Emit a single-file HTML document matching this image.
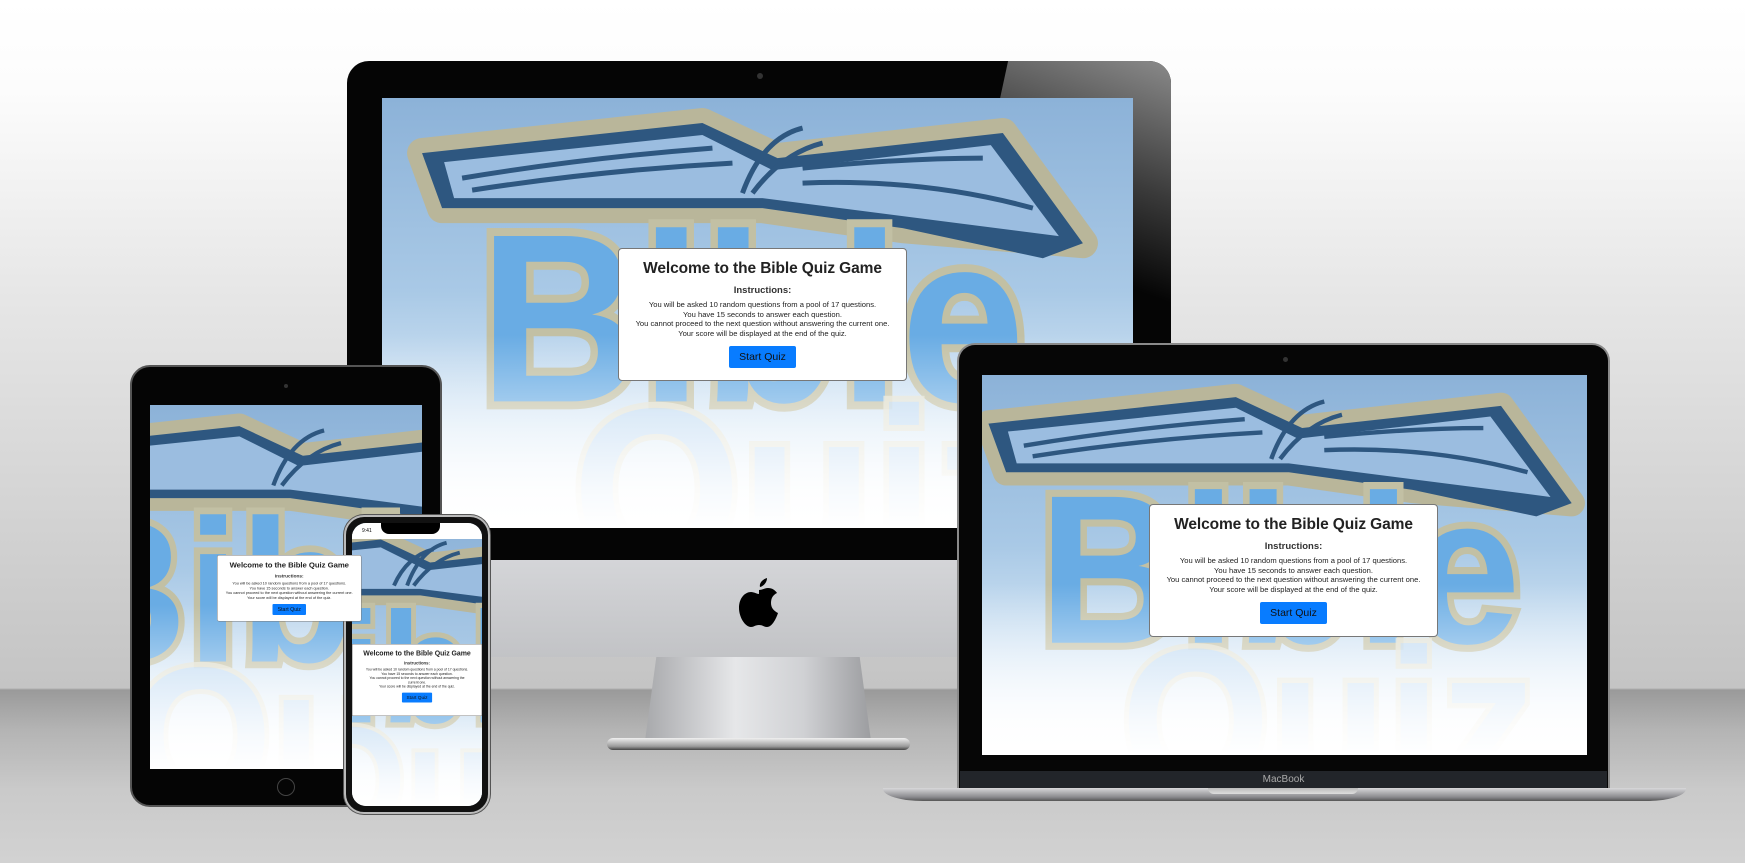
<!DOCTYPE html>
<html><head><meta charset="utf-8">
<style>
*{margin:0;padding:0;box-sizing:border-box}
body{width:1745px;height:863px;overflow:hidden;position:relative;font-family:"Liberation Sans",sans-serif;
background:linear-gradient(180deg,#fff 0px,#fcfcfc 90px,#e6e6e6 300px,#cfcfcf 560px,#c4c4c4 688px,#9a9a9a 690px,#b4b4b4 730px,#cacaca 790px,#d2d2d2 863px);}
.abs{position:absolute}
.scr{position:absolute;overflow:hidden;background:linear-gradient(180deg,#8cb2d8 0%,#a9c9e6 45%,#d8e8f6 75%,#fdfeff 100%)}
.scr svg{position:absolute;left:0;top:0;width:100%;height:100%}
.fade{position:absolute;left:0;right:0;bottom:0;height:45%;background:linear-gradient(180deg,rgba(255,255,255,0),rgba(255,255,255,0.85) 80%,#fff)}
.dlg{position:absolute;width:289px;height:133px;background:#fff;border:1px solid #777;border-radius:4px;text-align:center;color:#222;transform-origin:0 0;z-index:2}
.dlg h1{font-size:15.5px;font-weight:bold;margin-top:11px;letter-spacing:-0.1px}
.dlg h2{font-size:9.5px;font-weight:bold;margin-top:7px;color:#333}
.dlg p{font-size:7.6px;line-height:9.6px;margin-top:4px;color:#222}
.dlg .b{display:inline-block;margin-top:8px;background:#087cff;color:#111;font-size:10.5px;width:67px;height:22px;line-height:22px;border-radius:2px}
</style></head><body>

<!-- iMac -->
<div class="abs" style="left:347px;top:61px;width:824px;height:500px;background:#050505;border-radius:22px 22px 0 0"></div>
<div class="abs" style="left:990px;top:61px;width:181px;height:280px;background:linear-gradient(200deg,#8a8a8a 0%,#3a3a3a 40%,#050505 70%);clip-path:polygon(10% 0,100% 0,100% 100%,0 100%, 0 30%);border-radius:0 22px 0 0"></div>
<div class="abs" style="left:757px;top:73px;width:6px;height:6px;border-radius:50%;background:#333"></div>
<div class="abs" style="left:347px;top:560px;width:824px;height:97px;background:linear-gradient(180deg,#d4d5d8,#c2c3c6)"></div>
<svg class="abs" style="left:738px;top:578px" width="42" height="50" viewBox="0 0 42 50"><path d="M29 0c0 4-3 8-7 9c-1-4 3-8 7-9zM21 12c3 0 6-2 9-2c4 0 7 2 9 5c-4 2-6 5-6 10c0 5 3 8 7 10c-2 6-6 14-11 14c-3 0-4-2-8-2s-5 2-8 2C7 49 1 39 1 30C1 20 7 14 13 14c3 0 6 2 8 2z" fill="#000"/></svg>
<div class="abs" style="left:645px;top:657px;width:226px;height:84px;background:linear-gradient(90deg,#a8a9ac,#e6e7e9 40%,#d0d1d4 70%,#9c9da0);clip-path:polygon(5% 0,95% 0,100% 100%,0 100%)"></div>
<div class="abs" style="left:607px;top:738px;width:303px;height:12px;background:linear-gradient(180deg,#f0f0f0,#9a9a9a 70%,#444);border-radius:6px"></div>
<div class="scr" style="left:382px;top:98px;width:751px;height:430px">
<svg viewBox="0 0 750 430" preserveAspectRatio="xMidYMin slice"><g>
<polygon points="40,55 320,25 395,60 620,35 700,145 520,130 380,110 60,110" fill="#9bbde0" stroke="#b9b69a" stroke-width="30" stroke-linejoin="round"/>
<polygon points="40,55 320,25 395,60 620,35 700,145 660,160 520,130 380,110 60,110" fill="#2e5780"/>
<polygon points="62,64 320,37 390,72 608,47 676,138 380,100 72,100" fill="#9bbde0"/>
<path d="M80,80 Q200,60 330,50 M90,92 Q220,72 350,65 M420,70 Q520,60 600,60 M420,85 Q540,80 650,110 M360,95 Q380,40 420,30 M370,95 Q400,55 440,45" stroke="#2e5780" stroke-width="5" fill="none"/>
<text x="97" y="303" font-family="Liberation Sans" font-weight="bold" font-size="240" textLength="545" lengthAdjust="spacingAndGlyphs" fill="#69ace4" stroke="#c2c0a4" stroke-width="16" paint-order="stroke">Bible</text>
<text x="190" y="470" font-family="Liberation Sans" font-weight="bold" font-size="230" textLength="470" lengthAdjust="spacingAndGlyphs" fill="#bcd8f2" stroke="#e3e1cf" stroke-width="12" paint-order="stroke" opacity="0.8">Quiz</text>
</g></svg>
<div class="fade"></div>
<div class="dlg" style="left:236px;top:150px"><h1>Welcome to the Bible Quiz Game</h1><h2>Instructions:</h2><p>You will be asked 10 random questions from a pool of 17 questions.<br>You have 15 seconds to answer each question.<br>You cannot proceed to the next question without answering the current one.<br>Your score will be displayed at the end of the quiz.</p><div class="b">Start Quiz</div></div>
</div>

<!-- Laptop -->
<div class="abs" style="left:957px;top:343px;width:653px;height:445px;background:#060606;border-radius:18px 18px 0 0;border:2px solid #8a8a8a;border-bottom:none"></div>
<div class="abs" style="left:1283px;top:357px;width:5px;height:5px;border-radius:50%;background:#333"></div>
<div class="abs" style="left:960px;top:771px;width:647px;height:17px;background:#22252a;color:#aaa;font-size:10px;text-align:center;line-height:17px">MacBook</div>
<div class="abs" style="left:883px;top:788px;width:803px;height:13px;background:linear-gradient(180deg,#d8d8da,#8a8a8e 70%,#555);border-radius:0 0 40px 40px/0 0 12px 12px"></div>
<div class="abs" style="left:1208px;top:788px;width:150px;height:6px;background:linear-gradient(180deg,#bbb,#ddd);border-radius:0 0 6px 6px"></div>
<div class="scr" style="left:982px;top:375px;width:605px;height:380px">
<svg viewBox="0 0 750 430" preserveAspectRatio="xMidYMin slice"><g>
<polygon points="40,55 320,25 395,60 620,35 700,145 520,130 380,110 60,110" fill="#9bbde0" stroke="#b9b69a" stroke-width="30" stroke-linejoin="round"/>
<polygon points="40,55 320,25 395,60 620,35 700,145 660,160 520,130 380,110 60,110" fill="#2e5780"/>
<polygon points="62,64 320,37 390,72 608,47 676,138 380,100 72,100" fill="#9bbde0"/>
<path d="M80,80 Q200,60 330,50 M90,92 Q220,72 350,65 M420,70 Q520,60 600,60 M420,85 Q540,80 650,110 M360,95 Q380,40 420,30 M370,95 Q400,55 440,45" stroke="#2e5780" stroke-width="5" fill="none"/>
<text x="97" y="303" font-family="Liberation Sans" font-weight="bold" font-size="240" textLength="545" lengthAdjust="spacingAndGlyphs" fill="#69ace4" stroke="#c2c0a4" stroke-width="16" paint-order="stroke">Bible</text>
<text x="190" y="470" font-family="Liberation Sans" font-weight="bold" font-size="230" textLength="470" lengthAdjust="spacingAndGlyphs" fill="#bcd8f2" stroke="#e3e1cf" stroke-width="12" paint-order="stroke" opacity="0.8">Quiz</text>
</g></svg>
<div class="fade"></div>
<div class="dlg" style="left:167px;top:129px"><h1>Welcome to the Bible Quiz Game</h1><h2>Instructions:</h2><p>You will be asked 10 random questions from a pool of 17 questions.<br>You have 15 seconds to answer each question.<br>You cannot proceed to the next question without answering the current one.<br>Your score will be displayed at the end of the quiz.</p><div class="b">Start Quiz</div></div>
</div>

<!-- iPad -->
<div class="abs" style="left:130px;top:365px;width:312px;height:442px;background:#050505;border-radius:20px;border:2px solid #555"></div>
<div class="abs" style="left:284px;top:384px;width:4px;height:4px;border-radius:50%;background:#333"></div>
<div class="abs" style="left:277px;top:778px;width:18px;height:18px;border-radius:50%;border:1.5px solid #444"></div>
<div class="scr" style="left:150px;top:405px;width:272px;height:364px">
<svg viewBox="0 0 750 430" preserveAspectRatio="xMidYMin slice"><g>
<polygon points="40,55 320,25 395,60 620,35 700,145 520,130 380,110 60,110" fill="#9bbde0" stroke="#b9b69a" stroke-width="30" stroke-linejoin="round"/>
<polygon points="40,55 320,25 395,60 620,35 700,145 660,160 520,130 380,110 60,110" fill="#2e5780"/>
<polygon points="62,64 320,37 390,72 608,47 676,138 380,100 72,100" fill="#9bbde0"/>
<path d="M360,95 Q380,40 420,30 M370,95 Q400,55 440,45" stroke="#2e5780" stroke-width="5" fill="none"/>
<text x="97" y="303" font-family="Liberation Sans" font-weight="bold" font-size="240" textLength="545" lengthAdjust="spacingAndGlyphs" fill="#69ace4" stroke="#c2c0a4" stroke-width="16" paint-order="stroke">Bible</text>
<text x="190" y="470" font-family="Liberation Sans" font-weight="bold" font-size="230" textLength="470" lengthAdjust="spacingAndGlyphs" fill="#bcd8f2" stroke="#e3e1cf" stroke-width="12" paint-order="stroke" opacity="0.8">Quiz</text>
</g></svg>
<div class="fade"></div>
<div class="dlg" style="left:67px;top:150px;transform:scale(0.5)"><h1>Welcome to the Bible Quiz Game</h1><h2>Instructions:</h2><p>You will be asked 10 random questions from a pool of 17 questions.<br>You have 15 seconds to answer each question.<br>You cannot proceed to the next question without answering the current one.<br>Your score will be displayed at the end of the quiz.</p><div class="b">Start Quiz</div></div>
</div>

<!-- iPhone -->
<div class="abs" style="left:344px;top:515px;width:146px;height:299px;background:#111;border-radius:20px;border:2px solid #bbb;box-shadow:0 0 0 1px #555"></div>
<div class="scr" style="left:352px;top:523px;width:130px;height:283px;border-radius:14px">
<div class="abs" style="left:0;top:0;width:130px;height:16px;background:#fff;z-index:3;font-size:5px;padding:5px 0 0 10px">9:41</div>
<div class="abs" style="left:29px;top:0;width:59px;height:11px;background:#000;border-radius:0 0 8px 8px;z-index:4"></div>
<svg viewBox="150 0 450 430" preserveAspectRatio="xMidYMin slice"><g>
<polygon points="40,55 320,25 395,60 620,35 700,145 520,130 380,110 60,110" fill="#9bbde0" stroke="#b9b69a" stroke-width="30" stroke-linejoin="round"/>
<polygon points="40,55 320,25 395,60 620,35 700,145 660,160 520,130 380,110 60,110" fill="#2e5780"/>
<polygon points="62,64 320,37 390,72 608,47 676,138 380,100 72,100" fill="#9bbde0"/>
<path d="M360,95 Q380,40 420,30 M370,95 Q400,55 440,45 M340,95 Q360,50 400,40" stroke="#2e5780" stroke-width="6" fill="none"/>
<text x="97" y="303" font-family="Liberation Sans" font-weight="bold" font-size="240" textLength="545" lengthAdjust="spacingAndGlyphs" fill="#69ace4" stroke="#c2c0a4" stroke-width="16" paint-order="stroke">Bible</text>
<text x="190" y="470" font-family="Liberation Sans" font-weight="bold" font-size="230" textLength="470" lengthAdjust="spacingAndGlyphs" fill="#bcd8f2" stroke="#e3e1cf" stroke-width="12" paint-order="stroke" opacity="0.8">Quiz</text>
</g></svg>
<div class="fade"></div>
<div class="dlg" style="left:0;top:121px;transform:scale(0.45);height:160px;border-radius:0"><h1>Welcome to the Bible Quiz Game</h1><h2>Instructions:</h2><p>You will be asked 10 random questions from a pool of 17 questions.<br>You have 15 seconds to answer each question.<br>You cannot proceed to the next question without answering the<br>current one.<br>Your score will be displayed at the end of the quiz.</p><div class="b">Start Quiz</div></div>
</div>

</body></html>
